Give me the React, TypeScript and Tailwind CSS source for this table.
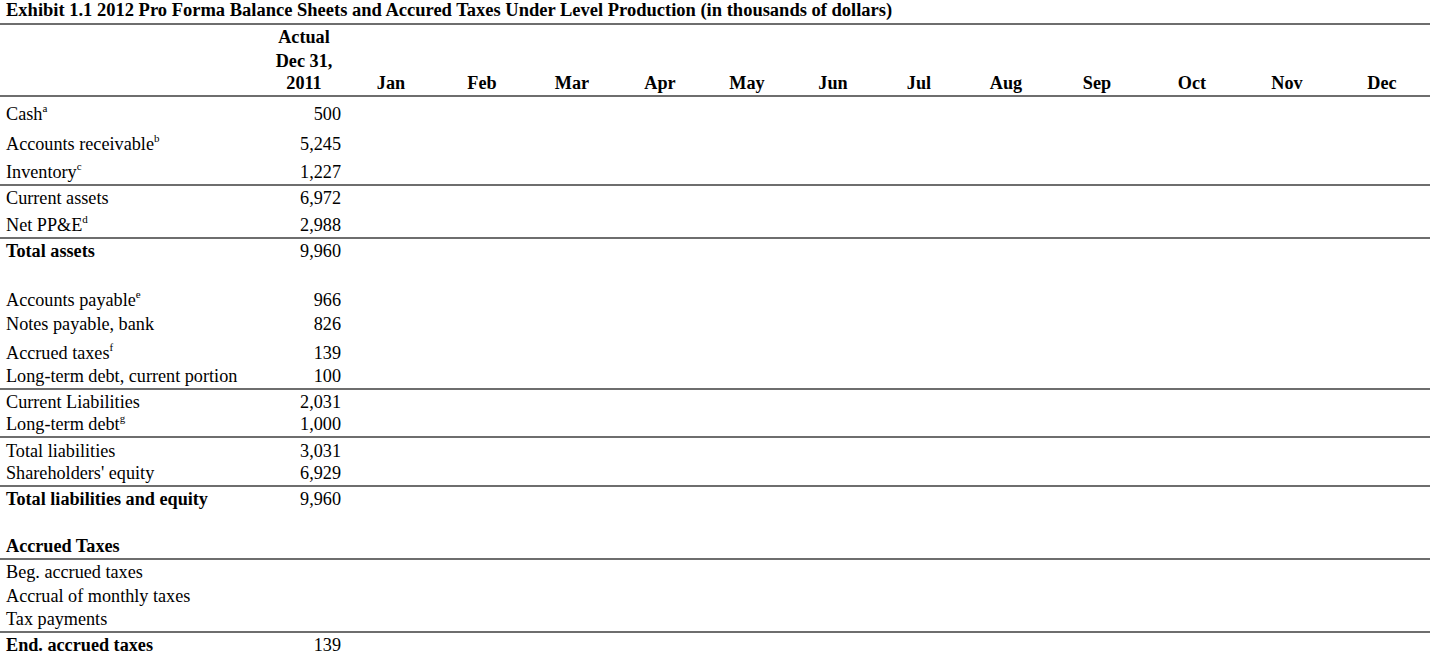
const months = ["Jan", "Feb", "Mar", "Apr", "May", "Jun", "Jul", "Aug", "Sep", "Oct", "Nov", "Dec"];

// month column widths, tuned so the header labels sit where they do in the exhibit
const monthWidths = [
  "w-[90px]", "w-[92px]", "w-[88px]", "w-[88px]", "w-[86px]", "w-[86px]",
  "w-[86px]", "w-[88px]", "w-[94px]", "w-[96px]", "w-[94px]", "w-[96px]",
];

type Row = {
  label?: string;
  sup?: string;
  value?: string;
  bold?: boolean;
  h: string;
  rule?: boolean;
};

const rows: Row[] = [
  { label: "Cash", sup: "a", value: "500", h: "h-[29px]" },
  { label: "Accounts receivable", sup: "b", value: "5,245", h: "h-[30px]" },
  { label: "Inventory", sup: "c", value: "1,227", h: "h-[30px]", rule: true },
  { label: "Current assets", value: "6,972", h: "h-[24px]" },
  { label: "Net PP&E", sup: "d", value: "2,988", h: "h-[29px]", rule: true },
  { label: "Total assets", value: "9,960", bold: true, h: "h-[24px]" },
  { h: "h-[24px]" },
  { label: "Accounts payable", sup: "e", value: "966", h: "h-[25px]" },
  { label: "Notes payable, bank", value: "826", h: "h-[24px]" },
  { label: "Accrued taxes", sup: "f", value: "139", h: "h-[29px]" },
  { label: "Long-term debt, current portion", value: "100", h: "h-[25px]", rule: true },
  { label: "Current Liabilities", value: "2,031", h: "h-[24px]" },
  { label: "Long-term debt", sup: "g", value: "1,000", h: "h-[24px]", rule: true },
  { label: "Total liabilities", value: "3,031", h: "h-[25px]" },
  { label: "Shareholders' equity", value: "6,929", h: "h-[24px]", rule: true },
  { label: "Total liabilities and equity", value: "9,960", bold: true, h: "h-[24px]" },
  { h: "h-[24px]" },
  { label: "Accrued Taxes", bold: true, h: "h-[25px]", rule: true },
  { label: "Beg. accrued taxes", h: "h-[24px]" },
  { label: "Accrual of monthly taxes", h: "h-[24px]" },
  { label: "Tax payments", h: "h-[25px]", rule: true },
  { label: "End. accrued taxes", value: "139", bold: true, h: "h-[24px]" },
];

function MonthCells({ labels }: { labels?: boolean }) {
  return (
    <>
      {months.map((m, i) => (
        <div key={m} className={`${monthWidths[i]} shrink-0 text-center font-bold`}>
          {labels ? m : ""}
        </div>
      ))}
    </>
  );
}

export default function App() {
  return (
    <div className="w-[1436px] h-[660px] bg-white text-black font-['Liberation_Serif','Times_New_Roman',serif] text-[18.2px] leading-[20px] overflow-hidden">
      <div className="w-[1430px]">
        <div className="h-[25px] flex items-end pb-[3px] pl-[6px] font-bold text-[18.5px] border-b-2 border-[#6e6e6e]">
          Exhibit 1.1 2012 Pro Forma Balance Sheets and Accured Taxes Under Level Production (in thousands of dollars)
        </div>

        {/* column headings */}
        <div className="flex items-end h-[24px] pb-[2px]">
          <div className="w-[262px] shrink-0" />
          <div className="w-[84px] shrink-0 text-center font-bold">Actual</div>
        </div>
        <div className="flex items-end h-[24px] pb-[2px]">
          <div className="w-[262px] shrink-0" />
          <div className="w-[84px] shrink-0 text-center font-bold">Dec 31,</div>
        </div>
        <div className="flex items-end h-[24px] pb-[2px] border-b-2 border-[#6e6e6e]">
          <div className="w-[262px] shrink-0" />
          <div className="w-[84px] shrink-0 text-center font-bold">2011</div>
          <MonthCells labels />
        </div>

        {rows.map((r, i) => (
          <div
            key={i}
            className={`flex items-end pb-[2px] ${r.h} ${r.rule ? "border-b-2 border-[#6e6e6e]" : ""}`}
          >
            <div className={`w-[262px] shrink-0 pl-[6px] whitespace-nowrap ${r.bold ? "font-bold" : ""}`}>
              {r.label}
              {r.sup && (
                <span className="relative -top-[8px] text-[11px] leading-none font-normal">{r.sup}</span>
              )}
            </div>
            <div className="w-[84px] shrink-0 text-right pr-[5px]">{r.value}</div>
            <MonthCells />
          </div>
        ))}
      </div>
    </div>
  );
}
